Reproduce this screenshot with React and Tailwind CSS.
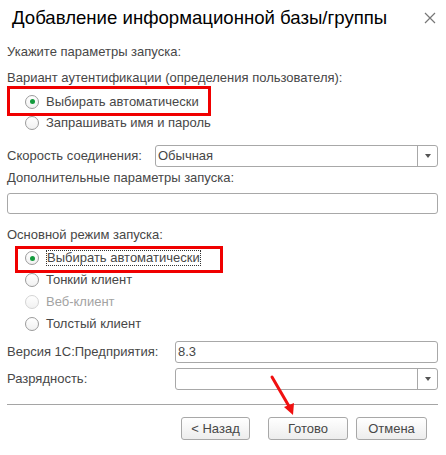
import React from 'react';

// радиокнопка в стиле 1С
function Radio({ checked, disabled, label, focused }) {
  return (
    <div className="flex h-[22px] items-center gap-[7px] pl-[18px]">
      <span
        className={
          'flex h-[14px] w-[14px] items-center justify-center rounded-full border bg-gradient-to-b from-white to-[#f1f1f1] ' +
          (disabled ? 'border-[#d4d4d4]' : 'border-[#9b9b9b]')
        }
      >
        {checked && <span className="h-[5px] w-[5px] rounded-full bg-[#139a3c]" />}
      </span>
      <span
        className={
          (disabled ? 'text-[#a3a3a3]' : 'text-[#474747]') +
          (focused ? ' border border-dotted border-[#333] leading-[14px]' : '')
        }
      >
        {label}
      </span>
    </div>
  );
}

function Select({ value, className }) {
  return (
    <div className={'flex h-[22px] rounded-[3px] border border-[#a8a8a8] bg-white ' + className}>
      <div className="flex flex-1 items-center pl-[2px] text-[#474747]">{value}</div>
      <div className="flex w-[20px] items-center justify-center border-l border-[#a8a8a8]">
        <span className="h-0 w-0 border-x-[3px] border-t-[4px] border-x-transparent border-t-[#555]" />
      </div>
    </div>
  );
}

function Button({ children, className }) {
  return (
    <button
      className={
        'h-[23px] rounded-[3px] border border-[#a8a8a8] bg-gradient-to-b from-white to-[#ededed] text-[13px] text-[#474747] ' +
        className
      }
    >
      {children}
    </button>
  );
}

export default function App() {
  return (
    <div
      className="relative h-[455px] w-[446px] bg-white text-[13px] text-[#474747]"
      style={{ fontFamily: '"Liberation Sans", Arial, sans-serif' }}
    >
      <div className="flex h-[35px] items-center justify-between pl-[12px] pr-[10px]">
        <h1 className="text-[18.6px] text-black">Добавление информационной базы/группы</h1>
        <svg width="12" height="12" viewBox="0 0 12 12" className="mt-[1px]">
          <path d="M1 1 L11 11 M11 1 L1 11" stroke="#777" strokeWidth="1.2" />
        </svg>
      </div>

      <div className="pl-[7px] pr-[8px]">
        <div className="mt-[6px] flex h-[22px] items-center">Укажите параметры запуска:</div>
        <div className="mt-[4px] flex h-[22px] items-center">
          Вариант аутентификации (определения пользователя):
        </div>
        <div className="mt-[2px] flex flex-col">
          <div className="h-[21px] flex items-center">
            <Radio checked label="Выбирать автоматически" />
          </div>
          <div className="h-[21px] flex items-center">
            <Radio label="Запрашивать имя и пароль" />
          </div>
        </div>

        <div className="mt-[12px] flex h-[22px] items-center">
          <span className="w-[148px]">Скорость соединения:</span>
          <Select value="Обычная" className="flex-1" />
        </div>

        <div className="mt-[1px] flex h-[20px] items-center">Дополнительные параметры запуска:</div>
        <div className="mt-[5px] h-[21px] rounded-[3px] border border-[#a8a8a8] bg-white" />

        <div className="mt-[11px] flex h-[20px] items-center">Основной режим запуска:</div>
        <div className="mt-[2px] flex flex-col">
          <Radio checked focused label="Выбирать автоматически" />
          <Radio label="Тонкий клиент" />
          <Radio disabled label="Веб-клиент" />
          <Radio label="Толстый клиент" />
        </div>

        <div className="mt-[6px] flex h-[22px] items-center">
          <span className="w-[168px]">Версия 1С:Предприятия:</span>
          <div className="flex h-[22px] flex-1 items-center rounded-[3px] border border-[#a8a8a8] bg-white pl-[2px]">
            8.3
          </div>
        </div>
        <div className="mt-[5px] flex h-[22px] items-center">
          <span className="w-[168px]">Разрядность:</span>
          <Select value="" className="flex-1" />
        </div>

        <div className="mt-[14px] border-t border-[#a5a5a5]" />

        <div className="mt-[12px] flex justify-end pr-[11px]">
          <Button className="w-[69px]">&lt; Назад</Button>
          <Button className="ml-[18px] w-[80px]">Готово</Button>
          <Button className="ml-[8px] w-[71px]">Отмена</Button>
        </div>
      </div>

      {/* пометки поверх скриншота */}
      <div className="absolute left-[7px] top-[86px] h-[30px] w-[204px] border-[3px] border-[#f00000]" />
      <div className="absolute left-[15px] top-[246px] h-[27px] w-[208px] border-[3px] border-[#f00000]" />
      <svg className="absolute left-[262px] top-[370px]" width="40" height="50" viewBox="0 0 40 50">
        <path d="M10 7 L28 38" stroke="#f01010" strokeWidth="3" strokeLinecap="round" />
        <path d="M22 37 L31 45 L32 33 Z" fill="#f01010" />
      </svg>
    </div>
  );
}
